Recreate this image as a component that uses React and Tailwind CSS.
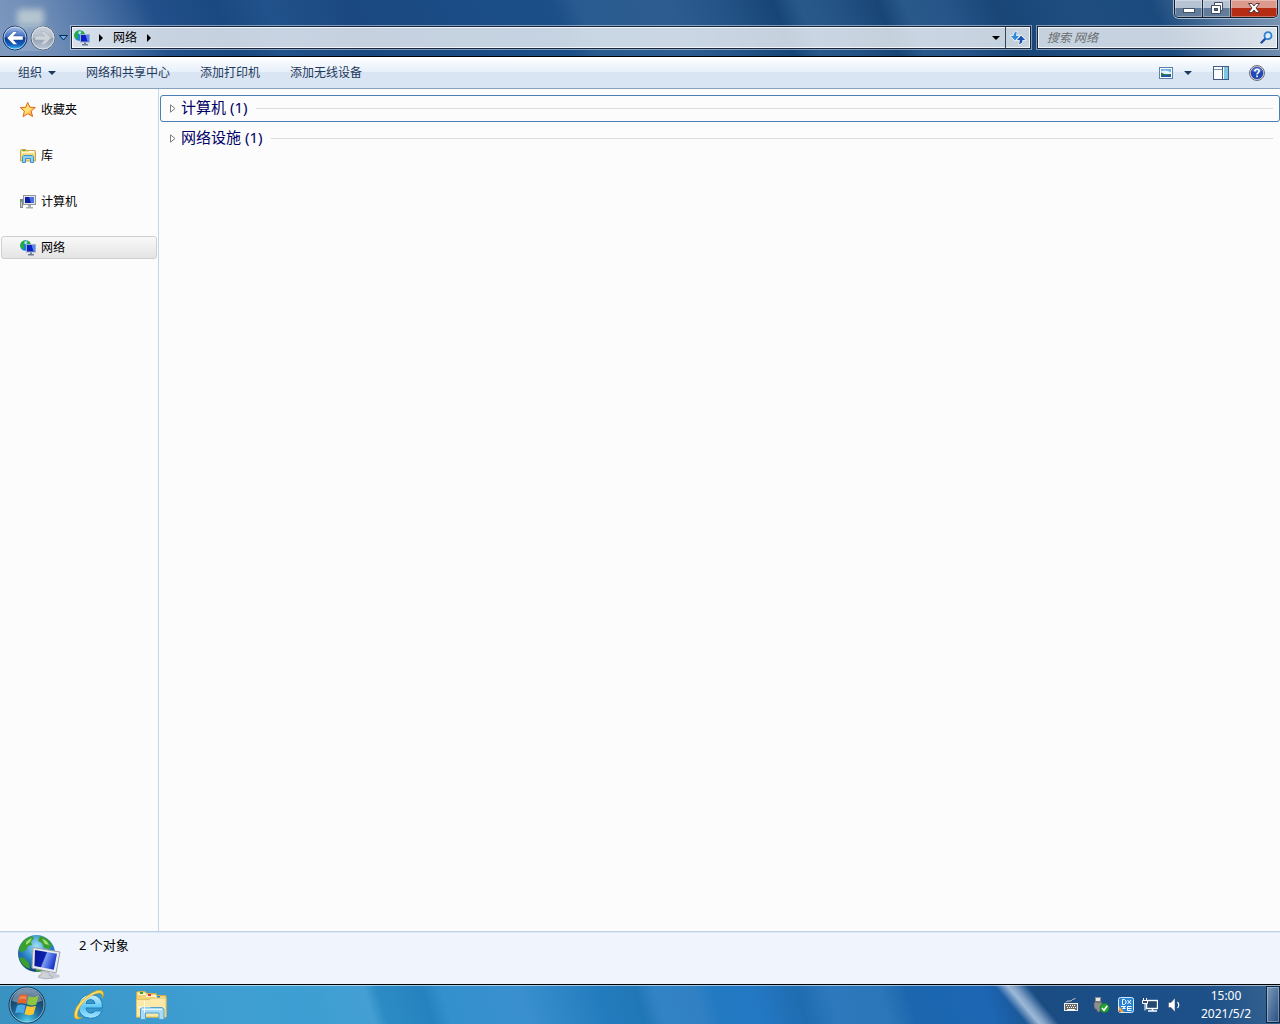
import React, { useState } from "react";

const NAV_ITEMS = [
  { id: "favorites", label: "收藏夹", icon: StarIcon },
  { id: "library", label: "库", icon: LibraryIcon },
  { id: "computer", label: "计算机", icon: ComputerIcon },
  { id: "network", label: "网络", icon: NetworkIcon },
];

const GROUPS = [
  { name: "计算机", count: 1 },
  { name: "网络设施", count: 1 },
];

const COMMANDS = ["网络和共享中心", "添加打印机", "添加无线设备"];

function StarIcon() {
  return (
    <svg width="16" height="16" viewBox="0 0 16 16" aria-hidden="true">
      <defs>
        <linearGradient id="star" x1="0" y1="0" x2="1" y2="1">
          <stop offset="0" stopColor="#ffc52e" />
          <stop offset=".5" stopColor="#ffe67a" />
          <stop offset="1" stopColor="#f08a1c" />
        </linearGradient>
      </defs>
      <path
        d="M7.700 .4l2.100 4.800 5.500.3-4.200 3.600 1.500 5.300-4.900-2.700-4.600 2.900 1.300-5.400L.4 5.700l5.300-.4z"
        fill="url(#star)"
        stroke="#e0661a"
        strokeLinejoin="round"
      />
    </svg>
  );
}

function LibraryIcon() {
  return (
    <svg width="16" height="16" viewBox="0 0 16 16" aria-hidden="true">
      <path d="M.5 2.500q0-1 1-1h4l1.500 1h7.500q1 0 1 1v9.500H.5z" fill="#f3dc86" stroke="#c9a548" />
      <path d="M1.500 4.500h13" stroke="#fff6cf" />
      <path d="M2.500 2.500h3" stroke="#3dae3b" />
      <path d="M9 3.500h5" stroke="#fff" />
      <path d="M2.500 14.500v-6l1-1h9l1 1v6h-3v-4h-5v4z" fill="#8fd0f2" stroke="#3f90c6" />
    </svg>
  );
}

function ComputerIcon() {
  return (
    <svg width="16" height="16" viewBox="0 0 16 16" aria-hidden="true">
      <rect x=".5" y="5.500" width="2" height="8" fill="#c9cdd1" stroke="#83888d" />
      <rect x="1" y="6" width="1" height="2" fill="#35c435" />
      <rect x="3.500" y="1.500" width="12" height="9" fill="#e4e6e8" stroke="#92979c" />
      <rect x="5" y="3" width="9" height="6" fill="#0a1ea6" />
      <path d="M9 3h5v6h-3z" fill="#4a6fe0" />
      <path d="M8 11h3v2h2v1.500H6V13h2z" fill="#a9adb1" />
    </svg>
  );
}

function NetworkIcon() {
  return (
    <svg width="16" height="16" viewBox="0 0 16 16" aria-hidden="true">
      <circle cx="5.500" cy="5.500" r="5.300" fill="#1f7fd6" />
      <path d="M.8 3.500Q2.500.4 5.500.3L5 3 3 4.200l1 2L3.200 9Q.3 8 .3 5zM7 .5q3 .5 3.800 3L8 4 7 2.500z" fill="#24b324" />
      <path d="M4.500 1.500q2-.8 3 .5L6 4.500l-1.500-.7z" fill="#bfeaff" />
      <rect x="6.500" y="4.500" width="9" height="7.500" fill="#0a20c4" stroke="#9fb0c6" />
      <path d="M11.500 5H15v6.500h-1.500z" fill="#5c86ee" />
      <path d="M10 12.500h2v1.500h2v1.500H8V14h2z" fill="#6d7e92" />
    </svg>
  );
}

function NetworkLargeIcon() {
  return (
    <svg width="44" height="46" viewBox="0 0 44 46" aria-hidden="true">
      <defs>
        <radialGradient id="globe" cx=".5" cy=".3" r=".75">
          <stop offset="0" stopColor="#9fe0f7" />
          <stop offset=".5" stopColor="#2c86c8" />
          <stop offset="1" stopColor="#0c3570" />
        </radialGradient>
        <linearGradient id="screen" x1="0" y1="0" x2="1" y2=".35">
          <stop offset="0" stopColor="#0a1690" />
          <stop offset=".5" stopColor="#0d1fae" />
          <stop offset=".56" stopColor="#7f9df2" />
          <stop offset="1" stopColor="#1a38cc" />
        </linearGradient>
      </defs>
      <ellipse cx="32" cy="42" rx="11" ry="3" fill="#c7ccd6" />
      <circle cx="19.500" cy="19.500" r="18.500" fill="url(#globe)" />
      <path d="M3 12Q7 4 15 2l2 2-3 4 1 3-4 1-2 4-4 2-3-1zM23 2q8 1 12 9l-3 4-5-1-2-5-4-2zM2 23l5 1 5 5 1 6q-9-3-11-12zM19 30l6 2 1 5-7 1z" fill="#3a9f2e" />
      <path d="M9 8q3-3 6-4l-2 4-4 3zM25 5q5 1 7 6l-4-1z" fill="#a5e070" />
      <path d="M16 13.500l27 4.500-4 21-24-5z" fill="#e9ecef" stroke="#9da3ab" />
      <path d="M18 16l22 3.700-3.200 16-19.400-3.700z" fill="url(#screen)" />
      <path d="M24 37l8 1.500.5 3q4 .5 3 2.500-7 2-14-.5 0-2 3-3z" fill="#cfd3d8" stroke="#a2a7ad" strokeWidth=".7" />
    </svg>
  );
}

function BackIcon() {
  return (
    <svg width="26" height="26" viewBox="0 0 26 26" aria-hidden="true">
      <defs>
        <linearGradient id="back" x1="0" y1="0" x2="0" y2="1">
          <stop offset="0" stopColor="#a9c2ea" />
          <stop offset=".45" stopColor="#3e6dc2" />
          <stop offset=".5" stopColor="#0b3690" />
          <stop offset=".8" stopColor="#1466c4" />
          <stop offset="1" stopColor="#45d2ff" />
        </linearGradient>
      </defs>
      <circle cx="13" cy="13" r="12" fill="url(#back)" stroke="#17325f" />
      <circle cx="13" cy="13" r="11" fill="none" stroke="#d5e6fa" strokeOpacity=".7" />
      <path d="M5 13l6.500-6.500h4L11.500 11H21v4h-9.500l4 4.500h-4z" fill="#fff" stroke="#234e91" strokeWidth=".5" />
    </svg>
  );
}

function ForwardIcon() {
  return (
    <svg width="26" height="26" viewBox="0 0 26 26" aria-hidden="true">
      <defs>
        <linearGradient id="forward" x1="0" y1="0" x2="0" y2="1">
          <stop offset="0" stopColor="#cbd3dd" />
          <stop offset=".48" stopColor="#b3bdc9" />
          <stop offset=".52" stopColor="#929fb0" />
          <stop offset="1" stopColor="#bcc9d8" />
        </linearGradient>
      </defs>
      <circle cx="13" cy="13" r="12" fill="url(#forward)" stroke="#53677f" />
      <circle cx="13" cy="13" r="11" fill="none" stroke="#e6ebf0" strokeOpacity=".8" />
      <path d="M21 13l-6.500-6.500h-4l4 4.500H5v4h9.500l-4 4.500h4z" fill="#ccd3da" stroke="#a6afba" strokeWidth=".5" />
    </svg>
  );
}

function RefreshIcon() {
  return (
    <svg width="16" height="14" viewBox="0 0 16 14" className="shrink-0" aria-hidden="true">
      <path
        d="M7 .8Q3.500 1 3.500 5H.8L5 9.500 9 5H6.300Q6 2.500 7 .8z"
        fill="#2f8ade"
        stroke="#fff"
        strokeWidth="1.200"
        paintOrder="stroke"
      />
      <path
        d="M9 13.200q3.500-.2 3.500-4.200h2.700L11 4.500 7 9h2.700q.3 2.500-.7 4.200z"
        fill="#1a55b4"
        stroke="#fff"
        strokeWidth="1.200"
        paintOrder="stroke"
      />
    </svg>
  );
}

function SearchIcon() {
  return (
    <svg width="13" height="13" viewBox="0 0 13 13" aria-hidden="true">
      <path d="M6 7L1.500 11.500" stroke="#1f4fa0" strokeWidth="2.400" strokeLinecap="round" />
      <circle cx="8" cy="4.700" r="3.500" fill="#dceefb" stroke="#2f80cf" strokeWidth="1.800" />
    </svg>
  );
}

function Triangle() {
  return (
    <svg width="8" height="4" viewBox="0 0 8 4" aria-hidden="true">
      <path d="M0 0h8L4 4z" fill="currentColor" />
    </svg>
  );
}

function RightTriangle() {
  return (
    <svg width="4" height="8" viewBox="0 0 4 8" aria-hidden="true">
      <path d="M0 0l4 4-4 4z" fill="#000" />
    </svg>
  );
}

function PictureIcon() {
  return (
    <svg width="14" height="12" viewBox="0 0 14 12" aria-hidden="true">
      <rect x=".5" y=".5" width="13" height="11" fill="#fff" stroke="#5f7fa8" />
      <rect x="2" y="2" width="10" height="8" fill="#6fb2ea" />
      <path d="M2 4.500q5-2.500 10 1V7H2z" fill="#e4f5fd" />
      <path d="M2 5.500l4 1.700 6-.2v3H2z" fill="#2b7448" />
      <path d="M2 9q5-1.500 10-.5V10H2z" fill="#1f58a6" />
    </svg>
  );
}

function PaneIcon() {
  return (
    <svg width="16" height="14" viewBox="0 0 16 14" aria-hidden="true">
      <rect x=".5" y=".5" width="15" height="13" fill="#fff" stroke="#3f5c85" />
      <path d="M1 3.500h8" stroke="#7d92b0" />
      <path d="M9.500 1v12" stroke="#3f5c85" />
      <rect x="11" y="1" width="4" height="12" fill="#7cc6e2" />
    </svg>
  );
}

function HelpIcon() {
  return (
    <svg width="16" height="16" viewBox="0 0 16 16" aria-hidden="true">
      <circle cx="8" cy="8" r="7.500" fill="#e8e8ec" stroke="#6c6c74" />
      <circle cx="8" cy="8" r="6" fill="#2148b8" stroke="#122c80" strokeWidth=".6" />
      <path d="M3 6q1-3.300 5-3.500 4 .2 5 3.500-5 2.500-10 0z" fill="#6f92e2" fillOpacity=".6" />
      <path d="M5.800 6.300Q6 4.200 8.100 4.200t2.100 1.900q0 1-1.100 1.700T8 9.500" fill="none" stroke="#fff" strokeWidth="1.600" />
      <rect x="7.200" y="10.500" width="1.700" height="1.700" fill="#fff" />
    </svg>
  );
}

function StartOrb() {
  return (
    <svg width="38" height="38" viewBox="0 0 38 38" aria-hidden="true">
      <defs>
        <radialGradient id="orb" cx=".5" cy=".95" r=".9">
          <stop offset="0" stopColor="#4fd0ee" />
          <stop offset=".4" stopColor="#1f6f9f" />
          <stop offset=".8" stopColor="#153f66" />
          <stop offset="1" stopColor="#41668a" />
        </radialGradient>
      </defs>
      <circle cx="19" cy="19" r="18" fill="url(#orb)" stroke="#143c5e" />
      <circle cx="19" cy="19" r="17" fill="none" stroke="#b4dcf0" strokeOpacity=".7" />
      <path d="M4 15Q7 3 19 3t15 12q-15 5-30 0z" fill="#fff" fillOpacity=".35" />
      <path d="M11.500 9.500q4.500-2.500 8 0L17.800 18q-4-2-8.500 0z" fill="#e8602a" />
      <path d="M20.800 10.300q4.500 2.200 9.700-.5L28.300 18.500q-5 2-9.300-.2z" fill="#8fc63e" />
      <path d="M9 19.500q4.300-2 8.500 0l-2 8q-3.800-2-8.500 0z" fill="#49a8e8" />
      <path d="M18.700 19.800q4.300 2 9.300 0l-2.500 8.500q-4.800 2-9-.2z" fill="#fcc632" />
      <path d="M11.500 11q4-2 7 0l-.5 2.500q-3.500-1.500-7.300.2z" fill="#f4a070" fillOpacity=".6" />
    </svg>
  );
}

function BrowserIcon() {
  return (
    <svg width="32" height="32" viewBox="0 0 32 32" aria-hidden="true">
      <defs>
        <linearGradient id="browser" x1="0" y1="0" x2="0" y2="1">
          <stop offset="0" stopColor="#c8f1ff" />
          <stop offset=".55" stopColor="#5cc5f4" />
          <stop offset="1" stopColor="#a5e6fd" />
        </linearGradient>
      </defs>
      <path
        d="M29.500 19H13q.5 4.800 5 5 3 0 4.200-2.200h6.800Q26.500 29 17.500 29.300 5.500 28.500 5.500 17.500 6 6 17.500 5.500 30 6 29.500 19zM13 14.500h9q-.4-3.800-4.500-4-4 .2-4.500 4z"
        fill="url(#browser)"
        stroke="#1e7fbd"
      />
      <path
        d="M9 28.500Q2 32 1.300 27 1 18.500 10.500 10 21 1 27.500 1.300 32 2.500 29.500 9 30 4.500 26.500 4 19 4.500 11.500 12 4.500 19.500 4.300 25.500 4.500 29.500 9 28.500z"
        fill="#fbd03a"
        stroke="#dba21e"
        strokeWidth=".6"
      />
      <path d="M2.500 25.500Q4 17.500 12 10.300 20 3.300 26.500 2.600" fill="none" stroke="#fff1a6" strokeWidth=".8" />
    </svg>
  );
}

function FolderIcon() {
  return (
    <svg width="34" height="32" viewBox="0 0 34 32" aria-hidden="true">
      <path d="M2.500 28V3.500l1-1H11l2 2h9l1 2h9V28z" fill="#f1d277" stroke="#d5ab45" />
      <path d="M4 5h8M12 7h10M21 9h10" stroke="#fffbe6" strokeWidth="1.500" />
      <path d="M6 4h3" stroke="#2da534" strokeWidth="2" />
      <path d="M14 6h3" stroke="#d6383a" strokeWidth="2" />
      <path d="M23 8h3" stroke="#2f87dc" strokeWidth="2" />
      <path d="M2.500 10.500h13l2-1.500h14.500v19H2.500z" fill="#fae9a8" stroke="#e2c266" />
      <path d="M6.500 30.500V20l1.500-1.500h20l2 1.500v10.500h-5V24H11.500v6.500z" fill="#a9dcf4" stroke="#4fa2cf" />
      <path d="M8 20.500h20" stroke="#e8f8ff" />
      <path d="M10.500 12v12M4.500 18h12" stroke="#fff" strokeOpacity=".8" />
    </svg>
  );
}

function KeyboardTrayIcon() {
  return (
    <svg width="16" height="16" viewBox="0 0 16 16" aria-hidden="true">
      <path d="M3 5.500Q3.500 3.500 6 4t3.500-1.500L12.500 1.500" fill="none" stroke="#c4c4c4" />
      <rect x="1.500" y="6.500" width="13" height="7" fill="#6a6a6a" stroke="#ededed" />
      <path d="M3 8.500h10M4 10.500h10" stroke="#fff" strokeDasharray="1 1" />
      <path d="M4 12.500h8" stroke="#fff" />
    </svg>
  );
}

function UsbTrayIcon() {
  return (
    <svg width="17" height="16" viewBox="0 0 17 16" aria-hidden="true">
      <rect x="2.500" y=".5" width="5" height="4" fill="#e6e6e6" stroke="#8c8c8c" />
      <path d="M1 5h8v5q0 2-2 3v2H4v-2q-3-1-3-3z" fill="#8c9095" stroke="#4b5057" strokeWidth=".7" />
      <circle cx="11.500" cy="11" r="4.600" fill="#24a332" stroke="#16782a" strokeWidth=".6" />
      <path d="M9 11l2 2.200 3.300-4.500" fill="none" stroke="#fff" strokeWidth="1.600" />
    </svg>
  );
}

function DisplayTrayIcon() {
  return (
    <svg width="16" height="16" viewBox="0 0 16 16" aria-hidden="true">
      <rect x=".5" y=".5" width="15" height="15" rx="2" fill="#2784d4" stroke="#d5ecfb" />
      <path d="M1 9l5 6H1z" fill="#f2a93a" />
      <path d="M1 13l2 2H1z" fill="#d8433a" />
      <path d="M4.500 2.500v5h2l1.500-1.500V4L6.500 2.500zM9.500 3l3.500 4M13 3L9.500 7M3 9.500h4.500l-3 2h3M13.500 9.500h-4v4h4M9.500 11.500h4" fill="none" stroke="#fff" />
    </svg>
  );
}

function NetworkTrayIcon() {
  return (
    <svg width="16" height="16" viewBox="0 0 16 16" aria-hidden="true">
      <rect x="4.500" y="3.500" width="11" height="8" fill="#24486f" stroke="#fff" strokeWidth="1.400" />
      <path d="M6 14h9M10.500 12v2" stroke="#fff" strokeWidth="1.500" />
      <path d="M.5 3.500h5v3h-5zM1.500 1v2M4.500 1v2M3 6.500v7" fill="#314d6d" stroke="#fff" />
    </svg>
  );
}

function SpeakerTrayIcon() {
  return (
    <svg width="16" height="16" viewBox="0 0 16 16" aria-hidden="true">
      <path d="M2.500 5.500H5l4-4.500v14l-4-4.500H2.500z" fill="#fff" stroke="#33475f" strokeWidth=".5" />
      <path d="M11.500 5q2.500 3 0 6" fill="none" stroke="#fff" strokeWidth="1.200" />
    </svg>
  );
}

function WindowControls() {
  return (
    <div className="flex h-[18px] overflow-hidden rounded-b-[5px] border border-t-0 border-[#101c2e] shadow-[0_0_0_1px_#a9bdd2]">
      <button
        type="button"
        aria-label="最小化"
        className="flex w-7 items-end justify-center border-r border-[#1c2d45] bg-linear-to-b from-[#b6c3d2] from-45% to-[#627c9b] to-50% pb-1 shadow-[inset_0_0_0_1px_#ffffff55]"
      >
        <svg width="12" height="5" viewBox="0 0 12 5" aria-hidden="true">
          <rect x=".5" y=".5" width="11" height="4" fill="#fff" stroke="#445468" />
        </svg>
      </button>
      <button
        type="button"
        aria-label="还原"
        className="flex w-7 items-center justify-center border-r border-[#1c2d45] bg-linear-to-b from-[#b6c3d2] from-45% to-[#627c9b] to-50% pb-px shadow-[inset_0_0_0_1px_#ffffff55]"
      >
        <svg width="12" height="12" viewBox="0 0 12 12" aria-hidden="true">
          <path d="M3.500.5h8v8h-2v3h-9v-8h3z" fill="#fff" stroke="#3d4c60" />
          <path d="M3.500 3.500h6v5" fill="none" stroke="#3d4c60" />
          <rect x="3.500" y="6.500" width="3" height="2" fill="#53667e" stroke="#3d4c60" />
        </svg>
      </button>
      <button
        type="button"
        aria-label="关闭"
        className="flex w-[46px] items-center justify-center bg-linear-to-b from-[#dc9a8c] from-45% to-[#b52c14] to-50% pb-px shadow-[inset_0_0_0_1px_#ffffff55]"
      >
        <svg width="12" height="10" viewBox="0 0 12 10" aria-hidden="true">
          <path d="M.5.5h3.500l2 2.500 2-2.500h3.500L8 5l3.500 4.500H8L6 7 4 9.500H.5L4 5z" fill="#fff" stroke="#5a3a3c" />
        </svg>
      </button>
    </div>
  );
}

function AddressBar() {
  return (
    <div className="flex h-[23px] min-w-0 flex-1 items-center border border-[#16263c] bg-white/75 shadow-[0_0_0_1px_#ffffff70,inset_0_0_0_1px_#ffffffc0]">
      <span className="pl-[2px]">
        <NetworkIcon />
      </span>
      <span className="w-[9px]" />
      <RightTriangle />
      <button type="button" className="px-[10px] text-xs leading-5 text-black">
        网络
      </button>
      <RightTriangle />
      <button type="button" aria-label="以前的位置" className="ml-auto px-[5px] text-black">
        <Triangle />
      </button>
      <button
        type="button"
        aria-label="刷新"
        className="flex h-full w-[25px] items-center justify-center border-l border-[#34465e]"
      >
        <RefreshIcon />
      </button>
    </div>
  );
}

function TitleArea() {
  return (
    <header className="border-b border-black bg-[linear-gradient(68deg,#809abf_0%,#6b8ab5_5%,#4a71a5_9%,#23508a_13%,#1a4880_18%,#22528b_22%,#1b4880_28%,#1b4d86_40%,#1c4f88_44%,#2a5b90_46%,#2d5d90_53%,#245387_57%,#174577_61%,#29598b_63%,#245284_66%,#184576_69%,#29588a_71%,#27558a_74%,#194677_78%,#1f4d80_84%,#1b4a7e_90%,#5e7fa5_96%,#7d97b5_100%)] pb-[7px]">
      <div className="flex h-[26px] items-start justify-between pr-[2px] pl-[17px]">
        {/* blurred desktop icon showing through the glass */}
        <div className="mt-[9px] h-[17px] w-[27px] rounded-[4px] bg-[#c6d3d6] opacity-80 blur-[3px]" />
        <WindowControls />
      </div>
      <div className="flex h-[23px] items-center pr-[2px] pl-[2px]">
        <div className="flex items-center gap-[2px] rounded-full bg-white/15">
          <button type="button" aria-label="后退">
            <BackIcon />
          </button>
          <button type="button" aria-label="前进">
            <ForwardIcon />
          </button>
        </div>
        <button type="button" aria-label="最近浏览的页面" className="flex w-[15px] justify-center">
          <svg width="9" height="6" viewBox="0 0 9 6" aria-hidden="true">
            <path d="M.5.5h8l-4 4.500z" fill="#5fb2ee" stroke="#0e2a52" />
          </svg>
        </button>
        <AddressBar />
        <form
          className="ml-[6px] flex h-[23px] w-[241px] items-center border border-[#16263c] bg-white/75 pr-1 pl-[9px] shadow-[0_0_0_1px_#ffffff70,inset_0_0_0_1px_#ffffffc0]"
          onSubmit={(e) => e.preventDefault()}
        >
          <input
            type="text"
            aria-label="搜索 网络"
            placeholder="搜索 网络"
            className="min-w-0 flex-1 bg-transparent text-xs italic outline-none placeholder:text-[#6a6d70]"
          />
          <button type="submit" aria-label="搜索">
            <SearchIcon />
          </button>
        </form>
      </div>
    </header>
  );
}

function CommandBar() {
  return (
    <div className="flex h-8 items-center gap-[30px] border-b border-[#8aa1be] bg-linear-to-b from-white via-[#e6effa] via-48% to-[#dae5f3] to-50% pr-[15px] pl-[18px] text-xs text-[#1e395b]">
      <button type="button" className="flex items-center gap-[6px]">
        组织
        <Triangle />
      </button>
      {COMMANDS.map((command) => (
        <button key={command} type="button">
          {command}
        </button>
      ))}
      <div className="ml-auto flex items-center">
        <button type="button" aria-label="更改您的视图">
          <PictureIcon />
        </button>
        <button type="button" aria-label="更多选项" className="px-[11px]">
          <Triangle />
        </button>
        <button type="button" aria-label="显示预览窗格" className="mx-[10px]">
          <PaneIcon />
        </button>
        <button type="button" aria-label="获取帮助" className="ml-[10px]">
          <HelpIcon />
        </button>
      </div>
    </div>
  );
}

function Sidebar({ selected, onSelect }) {
  return (
    <nav className="flex w-[159px] shrink-0 flex-col gap-[23px] border-r border-[#c0d8ee] px-px pt-[9px]">
      {NAV_ITEMS.map(({ id, label, icon: Icon }) => (
        <button
          key={id}
          type="button"
          onClick={() => onSelect(id)}
          className={
            id === selected
              ? "flex h-[23px] items-center gap-[5px] rounded-[3px] border border-[#cfcfcf] bg-linear-to-b from-[#f9f9f9] to-[#e4e4e4] pl-[18px] text-xs"
              : "flex h-[23px] items-center gap-[5px] rounded-[3px] border border-transparent pl-[18px] text-xs"
          }
        >
          <Icon />
          {label}
        </button>
      ))}
    </nav>
  );
}

function GroupList() {
  const [active, setActive] = useState(0);

  return (
    <main className="flex min-w-0 flex-1 flex-col gap-[3px] pt-[6px] pl-px">
      {GROUPS.map((group, index) => (
        <button
          key={group.name}
          type="button"
          onClick={() => setActive(index)}
          className={
            index === active
              ? "flex h-[27px] items-center rounded-[3px] border border-[#4a7eb5] pr-[6px] pl-[9px]"
              : "flex h-[27px] items-center rounded-[3px] border border-transparent pr-[6px] pl-[9px]"
          }
        >
          <svg width="6" height="9" viewBox="0 0 6 9" aria-hidden="true">
            <path d="M.5.8L5 4.500.5 8.200z" fill="#fff" stroke="#7d7d7d" />
          </svg>
          <span className="pr-2 pb-[3px] pl-[5px] text-[15px] leading-5 text-[#000066]">
            {group.name} ({group.count})
          </span>
          <span className="h-px flex-1 bg-[#dcdcdc]" />
        </button>
      ))}
    </main>
  );
}

function DetailsPane() {
  return (
    <section className="flex h-[53px] items-start border-t border-[#bcd0e6] bg-[#f0f4fc] pt-[2px] pl-[17px] shadow-[inset_0_1px_0_#dfe8f4]">
      <NetworkLargeIcon />
      <span className="pl-[18px] text-[13px] leading-[22px] text-black">2 个对象</span>
    </section>
  );
}

function Taskbar() {
  return (
    <footer className="flex h-10 items-center border-t border-black bg-[linear-gradient(50deg,transparent_78.2%,#9db9d8_79.2%,#7f9fc4_79.7%,transparent_80.7%),linear-gradient(73deg,#3a91c0_0%,#3a97ca_6%,#3f9fd3_19%,#3c9ed2_24%,#449fd3_29%,#2c8bc5_30%,#2682be_33.5%,#3390cc_35%,#3a90ce_41%,#237cbe_47%,#2177b6_50%,#3283c6_51.5%,#3180c4_54.5%,#227ac2_56%,#2378c4_59%,#1f6cb0_62.5%,#2e79bd_65%,#2b76b8_69%,#1b66ae_71%,#1c66b4_77%,#1b5a9c_79%,#1a4c82_81%,#1b4f88_88%,#1e5088_94%,#386591_100%)] shadow-[inset_0_1px_0_#ffffff90]">
      <button type="button" aria-label="开始" className="ml-2">
        <StartOrb />
      </button>
      <button type="button" aria-label="Internet Explorer" className="ml-[27px]">
        <BrowserIcon />
      </button>
      <button type="button" aria-label="Windows 资源管理器" className="ml-[29px]">
        <FolderIcon />
      </button>
      <div className="ml-auto flex items-center gap-2 pr-1">
        <span className="mr-[6px]">
          <KeyboardTrayIcon />
        </span>
        <UsbTrayIcon />
        <DisplayTrayIcon />
        <NetworkTrayIcon />
        <SpeakerTrayIcon />
      </div>
      <time
        dateTime="2021-05-02T15:00"
        className="flex w-20 flex-col text-center text-xs leading-[18px] text-white"
      >
        <span>15:00</span>
        <span>2021/5/2</span>
      </time>
      <button
        type="button"
        aria-label="显示桌面"
        className="h-[37px] w-[14px] border border-[#0f2744] bg-linear-to-br from-[#7d9bbc] to-[#274f80] shadow-[inset_0_0_0_1px_#ffffff50]"
      />
    </footer>
  );
}

export default function App() {
  const [selected, setSelected] = useState("network");

  return (
    <div className="flex min-h-screen flex-col bg-[#fcfcfc] font-['Noto_Sans','Noto_Sans_CJK_SC',sans-serif] text-black">
      <TitleArea />
      <CommandBar />
      <div className="flex flex-1">
        <Sidebar selected={selected} onSelect={setSelected} />
        <GroupList />
      </div>
      <DetailsPane />
      <Taskbar />
    </div>
  );
}
